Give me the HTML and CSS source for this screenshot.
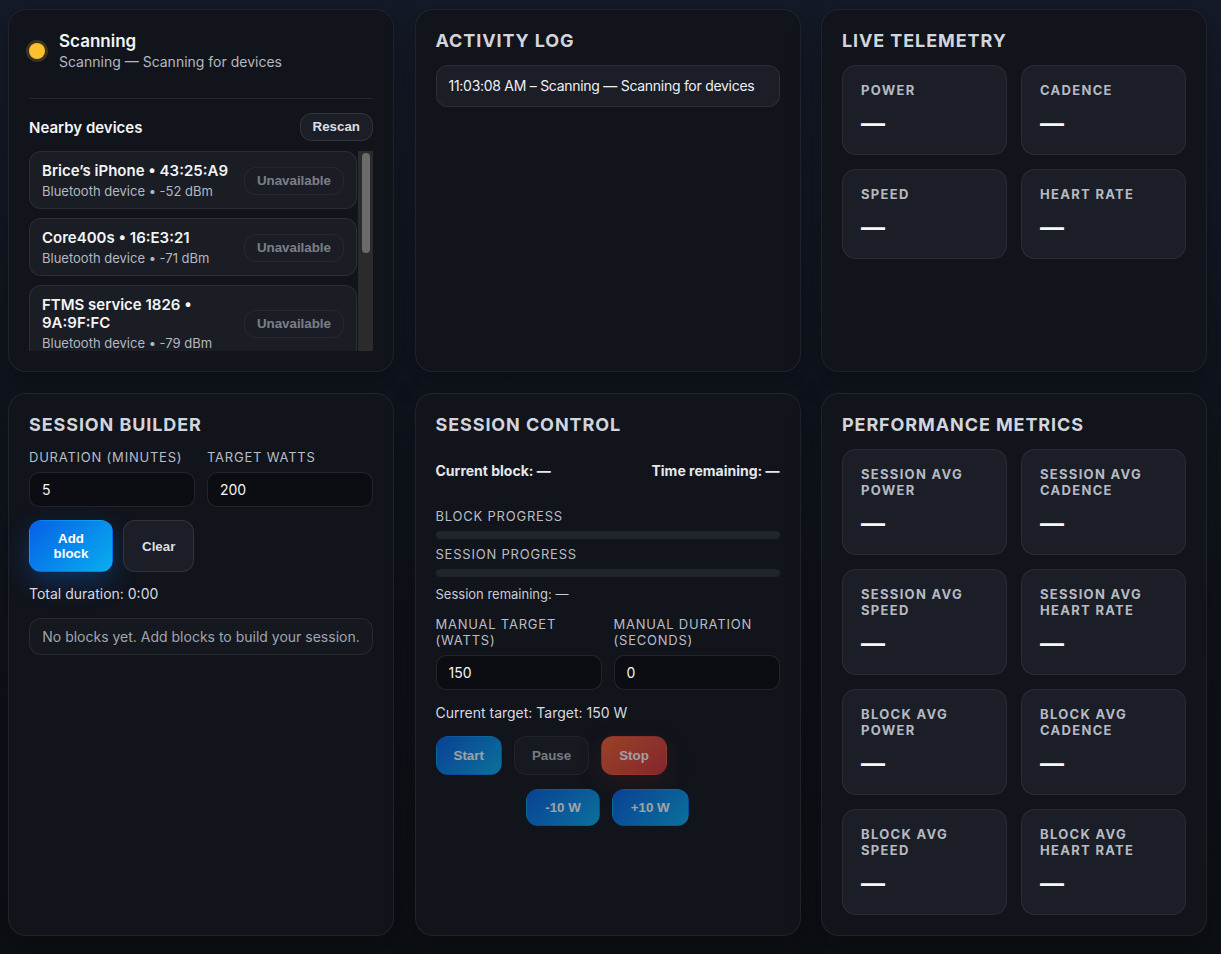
FILE: index.html
```html
<!DOCTYPE html>
<html lang="en">
<head>
<meta charset="utf-8">
<title>Trainer Dashboard</title>
<link rel="stylesheet" href="styles.css">
</head>
<body>
<main class="dashboard">
  <section class="card">
    <div class="status">
      <span class="status-dot"></span>
      <div class="status-text">
        <div class="status-title">Scanning</div>
        <div class="status-sub">Scanning — Scanning for devices</div>
      </div>
    </div>
    <div class="devices-head">
      <span class="devices-title">Nearby devices</span>
      <button class="btn btn-secondary btn-sm">Rescan</button>
    </div>
    <div class="device-scroll">
      <ul class="device-list">
        <li class="device">
          <div class="device-info">
            <div class="device-name">Brice’s iPhone • 43:25:A9</div>
            <div class="device-meta">Bluetooth device • -52 dBm</div>
          </div>
          <button class="btn btn-secondary btn-sm" disabled>Unavailable</button>
        </li>
        <li class="device">
          <div class="device-info">
            <div class="device-name">Core400s • 16:E3:21</div>
            <div class="device-meta">Bluetooth device • -71 dBm</div>
          </div>
          <button class="btn btn-secondary btn-sm" disabled>Unavailable</button>
        </li>
        <li class="device">
          <div class="device-info">
            <div class="device-name">FTMS service 1826 • 9A:9F:FC</div>
            <div class="device-meta">Bluetooth device • -79 dBm</div>
          </div>
          <button class="btn btn-secondary btn-sm" disabled>Unavailable</button>
        </li>
      </ul>
      <div class="scrollbar"><div class="scrollbar-thumb"></div></div>
    </div>
  </section>

  <section class="card">
    <h2 class="card-title">Activity log</h2>
    <ul class="log">
      <li class="log-entry">11:03:08 AM – Scanning — Scanning for devices</li>
    </ul>
  </section>

  <section class="card">
    <h2 class="card-title">Live telemetry</h2>
    <div class="metric-grid">
      <div class="metric"><div class="metric-label">Power</div><div class="metric-value">—</div></div>
      <div class="metric"><div class="metric-label">Cadence</div><div class="metric-value">—</div></div>
      <div class="metric"><div class="metric-label">Speed</div><div class="metric-value">—</div></div>
      <div class="metric"><div class="metric-label">Heart rate</div><div class="metric-value">—</div></div>
    </div>
  </section>

  <section class="card">
    <h2 class="card-title">Session builder</h2>
    <div class="field-grid">
      <label class="field">
        <span class="field-label">Duration (minutes)</span>
        <input class="input" type="text" value="5">
      </label>
      <label class="field">
        <span class="field-label">Target watts</span>
        <input class="input" type="text" value="200">
      </label>
    </div>
    <div class="builder-actions">
      <button class="btn btn-primary btn-add">Add block</button>
      <button class="btn btn-secondary">Clear</button>
    </div>
    <div class="total">Total duration: 0:00</div>
    <div class="empty">No blocks yet. Add blocks to build your session.</div>
  </section>

  <section class="card">
    <h2 class="card-title">Session control</h2>
    <div class="summary">
      <span>Current block: —</span>
      <span>Time remaining: —</span>
    </div>
    <div class="progress-label first">Block progress</div>
    <div class="progress"><div class="progress-fill" style="width:0%"></div></div>
    <div class="progress-label">Session progress</div>
    <div class="progress"><div class="progress-fill" style="width:0%"></div></div>
    <div class="remaining">Session remaining: —</div>
    <div class="field-grid manual">
      <label class="field">
        <span class="field-label">Manual target (watts)</span>
        <input class="input" type="text" value="150">
      </label>
      <label class="field">
        <span class="field-label">Manual duration (seconds)</span>
        <input class="input" type="text" value="0">
      </label>
    </div>
    <div class="current-target">Current target: Target: 150 W</div>
    <div class="controls">
      <button class="btn btn-primary btn-ctrl" disabled>Start</button>
      <button class="btn btn-secondary btn-ctrl" disabled>Pause</button>
      <button class="btn btn-danger btn-ctrl" disabled>Stop</button>
    </div>
    <div class="adjust">
      <button class="btn btn-primary btn-adj" disabled>-10 W</button>
      <button class="btn btn-primary btn-adj" disabled>+10 W</button>
    </div>
  </section>

  <section class="card">
    <h2 class="card-title">Performance metrics</h2>
    <div class="metric-grid perf">
      <div class="metric"><div class="metric-label">Session avg power</div><div class="metric-value">—</div></div>
      <div class="metric"><div class="metric-label">Session avg cadence</div><div class="metric-value">—</div></div>
      <div class="metric"><div class="metric-label">Session avg speed</div><div class="metric-value">—</div></div>
      <div class="metric"><div class="metric-label">Session avg heart rate</div><div class="metric-value">—</div></div>
      <div class="metric"><div class="metric-label">Block avg power</div><div class="metric-value">—</div></div>
      <div class="metric"><div class="metric-label">Block avg cadence</div><div class="metric-value">—</div></div>
      <div class="metric"><div class="metric-label">Block avg speed</div><div class="metric-value">—</div></div>
      <div class="metric"><div class="metric-label">Block avg heart rate</div><div class="metric-value">—</div></div>
    </div>
  </section>
</main>
</body>
</html>
```

FILE: styles.css
```css
* { box-sizing: border-box; }

html, body {
  margin: 0;
  padding: 0;
}

body {
  min-height: 954px;
  background: linear-gradient(180deg, #141a28 0%, #10141d 38%, #0c0f14 100%);
  font-family: Inter, "Noto Sans", "Liberation Sans", sans-serif;
  color: #e5e7eb;
  font-size: 14px;
}

.dashboard {
  display: grid;
  grid-template-columns: repeat(3, 386px);
  column-gap: 20.5px;
  row-gap: 21px;
  padding: 9px 0 20px 8px;
  align-items: stretch;
}

.card {
  background: #11141b;
  border: 1px solid rgba(255, 255, 255, 0.065);
  border-radius: 18px;
  padding: 20px;
  box-shadow: 0 10px 30px rgba(0, 0, 0, 0.25);
}

.card-title {
  margin: 0 0 13px;
  font-size: 18px;
  line-height: 22px;
  font-weight: 700;
  letter-spacing: 0.05em;
  text-transform: uppercase;
  color: #d2d5db;
}

/* Buttons */
.btn {
  font-family: "Liberation Sans", Arial, sans-serif;
  font-size: 13.33px;
  font-weight: 700;
  line-height: 15px;
  border-radius: 12px;
  border: 1px solid transparent;
  padding: 11px 18px;
  color: #ffffff;
  cursor: pointer;
}

.btn:disabled {
  opacity: 0.6;
  cursor: default;
}

.btn-primary {
  background: linear-gradient(135deg, #0760e6 0%, #08aef0 100%);
  box-shadow: 0 10px 26px rgba(8, 110, 240, 0.32);
}

.btn-primary:disabled {
  box-shadow: none;
}

.btn-danger {
  background: linear-gradient(135deg, #f5622f 0%, #d1323c 100%);
  box-shadow: 0 8px 24px rgba(220, 50, 50, 0.2);
}

.btn-secondary {
  background: #1b1e26;
  border-color: rgba(255, 255, 255, 0.1);
  color: #dcdfe4;
}

.btn-secondary:disabled {
  opacity: 0.5;
}

.btn-sm {
  padding: 6px 12px;
  line-height: 14px;
  border-radius: 12px;
}

/* Device card */
.status {
  display: flex;
  align-items: center;
  gap: 14px;
  padding-bottom: 26px;
  border-bottom: 1px solid rgba(255, 255, 255, 0.08);
}

.status-dot {
  width: 16px;
  height: 16px;
  border-radius: 50%;
  background: #fbc02d;
  box-shadow: 0 0 0 3px rgba(251, 192, 45, 0.18);
  flex: none;
}

.status-title {
  font-size: 17px;
  line-height: 22px;
  font-weight: 600;
  color: #f3f4f6;
}

.status-sub {
  font-size: 14px;
  line-height: 20px;
  color: #b4b8c1;
}

.devices-head {
  display: flex;
  align-items: center;
  justify-content: space-between;
  margin-top: 14px;
}

.devices-title {
  font-size: 15px;
  font-weight: 600;
  color: #f3f4f6;
}

.device-scroll {
  display: flex;
  margin-top: 10px;
  height: 200px;
}

.device-list {
  flex: 1;
  list-style: none;
  margin: 0;
  padding: 0;
  overflow: hidden;
  display: flex;
  flex-direction: column;
  gap: 9px;
}

.scrollbar {
  flex: none;
  width: 15px;
  background: #2b2b2b;
  padding: 2px 3px 0 4px;
}

.scrollbar-thumb {
  height: 100px;
  border-radius: 5px;
  background: #6b6b6b;
}

.device {
  display: flex;
  align-items: center;
  justify-content: space-between;
  gap: 10px;
  padding: 10px 12px 9px;
  margin-right: 1px;
  background: #1a1d24;
  border: 1px solid rgba(255, 255, 255, 0.08);
  border-radius: 12px;
  flex: none;
}

.device-name {
  font-size: 15px;
  line-height: 18px;
  font-weight: 600;
  color: #f3f4f6;
}

.device-meta {
  margin-top: 3px;
  font-size: 13px;
  line-height: 16px;
  color: #b4b8c1;
}

.device .btn {
  flex: none;
}

/* Log */
.log {
  list-style: none;
  margin: 0;
  padding: 0;
}

.log-entry {
  padding: 10px 12px;
  font-size: 14px;
  line-height: 20px;
  letter-spacing: -0.02em;
  white-space: nowrap;
  color: #eef0f3;
  background: #1b1e26;
  border: 1px solid rgba(255, 255, 255, 0.08);
  border-radius: 12px;
}

/* Metrics */
.metric-grid {
  display: grid;
  grid-template-columns: 1fr 1fr;
  gap: 14px;
}

.metric {
  padding: 16px 18px 17px;
  background: #1b1e26;
  border: 1px solid rgba(255, 255, 255, 0.07);
  border-radius: 14px;
}

.metric-label {
  font-size: 13px;
  line-height: 16px;
  font-weight: 700;
  letter-spacing: 0.1em;
  text-transform: uppercase;
  color: #b6bac3;
}

.metric-value {
  margin-top: 13px;
  font-size: 24px;
  line-height: 26px;
  font-weight: 700;
  color: #f5f6f8;
}

/* Forms */
.field-grid {
  display: grid;
  grid-template-columns: 1fr 1fr;
  gap: 12px;
}

.field {
  display: flex;
  flex-direction: column;
  justify-content: flex-end;
  gap: 7px;
}

.field-label {
  font-size: 13px;
  line-height: 16px;
  letter-spacing: 0.06em;
  text-transform: uppercase;
  color: #b9bdc5;
}

.input {
  width: 100%;
  height: 35px;
  padding: 0 12px;
  font-family: Inter, "Noto Sans", sans-serif;
  font-size: 14px;
  color: #f3f4f6;
  background: #0b0d12;
  border: 1px solid rgba(255, 255, 255, 0.1);
  border-radius: 10px;
  outline: none;
}

.builder-actions {
  display: flex;
  gap: 10px;
  margin-top: 13px;
}

.btn-add {
  width: 84px;
  padding: 10px 12px;
}

.total {
  margin-top: 12px;
  font-size: 14px;
  line-height: 20px;
  color: #d7dae0;
}

.empty {
  margin-top: 14px;
  padding: 8px 12px;
  font-size: 14px;
  line-height: 19px;
  text-align: center;
  color: #a0a5ae;
  background: #15181f;
  border: 1px solid rgba(255, 255, 255, 0.08);
  border-radius: 12px;
}

/* Session control */
.summary {
  display: flex;
  justify-content: space-between;
  margin-top: 25px;
  font-size: 14px;
  line-height: 20px;
  font-weight: 700;
  color: #e5e7eb;
}

.progress-label {
  margin-top: 7px;
  font-size: 13px;
  line-height: 16px;
  letter-spacing: 0.06em;
  text-transform: uppercase;
  color: #b9bdc5;
}

.progress-label.first {
  margin-top: 27px;
}

.progress {
  margin-top: 7px;
  height: 8px;
  border-radius: 999px;
  background: #20242c;
  overflow: hidden;
}

.progress-fill {
  height: 100%;
  background: linear-gradient(90deg, #0760e6, #08aef0);
}

.remaining {
  margin-top: 9px;
  font-size: 13px;
  line-height: 16px;
  color: #c8ccd3;
}

.manual {
  margin-top: 14px;
}

.current-target {
  margin-top: 13px;
  font-size: 14px;
  line-height: 20px;
  color: #d7dae0;
}

.controls {
  display: flex;
  gap: 12px;
  margin-top: 13px;
}

.btn-ctrl {
  padding: 11px 17px;
  line-height: 15px;
}

.adjust {
  display: flex;
  justify-content: center;
  gap: 12px;
  margin-top: 14px;
}

.btn-adj {
  padding: 10px 18px;
  line-height: 15px;
}
```
